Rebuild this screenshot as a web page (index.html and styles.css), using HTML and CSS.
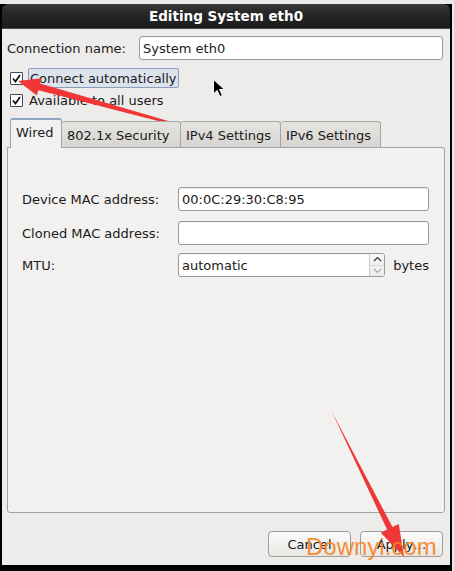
FILE: index.html
```html
<!DOCTYPE html>
<html>
<head>
<meta charset="utf-8">
<link rel="stylesheet" href="styles.css">
</head>
<body>
<div class="screen">
  <div class="window">
    <div class="titlebar">Editing System eth0</div>
    <div class="body">
      <div class="name-row">
        <span class="label">Connection name:</span>
        <div class="entry name-entry">System eth0</div>
      </div>
      <div class="check-row">
        <span class="cb"><svg width="11" height="11" viewBox="0 0 11 11"><path d="M2 5.5 L4.5 8.5 L9 2" fill="none" stroke="#111" stroke-width="1.7"/></svg></span>
        <span class="cb-label focus">Connect automatically</span>
      </div>
      <div class="check-row second">
        <span class="cb"><svg width="11" height="11" viewBox="0 0 11 11"><path d="M2 5.5 L4.5 8.5 L9 2" fill="none" stroke="#111" stroke-width="1.7"/></svg></span>
        <span class="cb-label">Available to all users</span>
      </div>
      <div class="tabs">
        <div class="tab active">Wired</div>
        <div class="tab">802.1x Security</div>
        <div class="tab">IPv4 Settings</div>
        <div class="tab">IPv6 Settings</div>
      </div>
      <div class="panel">
        <div class="field">
          <span class="flabel">Device MAC address:</span>
          <div class="entry grow">00:0C:29:30:C8:95</div>
        </div>
        <div class="field">
          <span class="flabel">Cloned MAC address:</span>
          <div class="entry grow"></div>
        </div>
        <div class="field mtu">
          <span class="flabel">MTU:</span>
          <div class="entry grow spin-entry">
            <span class="spin-text">automatic</span>
            <span class="spinner">
              <span class="spin-btn"><svg width="9" height="6" viewBox="0 0 9 6"><path d="M1 5 L4.5 1.5 L8 5" fill="none" stroke="#333" stroke-width="1.2"/></svg></span>
              <span class="spin-btn"><svg width="9" height="6" viewBox="0 0 9 6"><path d="M1 1 L4.5 4.5 L8 1" fill="none" stroke="#aaa" stroke-width="1.2"/></svg></span>
            </span>
          </div>
          <span class="unit">bytes</span>
        </div>
      </div>
      <div class="buttons">
        <button class="btn">Cancel</button>
        <button class="btn">Apply…</button>
      </div>
    </div>
  </div>

  <svg class="annot" width="454" height="571" viewBox="0 0 454 571">
    <polygon points="240,142 40.1,83.5 41.6,78.2 18,81 36.8,95.6 38.3,90.3" fill="#f03636"/>
    <polygon points="332,412 392.5,527 398.8,523.9 404,557 380.8,532.8 387.1,529.6" fill="#f03636"/>
    <path d="M213.5 79.5 L213.5 94 L217 90.5 L220 96.5 L222.5 95.3 L219.6 89.5 L224.5 89.5 Z" fill="#000" stroke="#fff" stroke-width="1"/>
  </svg>
  <div class="watermark">Downyi.com</div>
</div>
</body>
</html>
```

FILE: styles.css
```css
html, body {
  margin: 0;
  padding: 0;
}

body {
  background: #000;
  font-family: "DejaVu Sans", sans-serif;
  font-size: 13px;
  color: #1a1a1a;
}

.screen {
  position: relative;
  width: 454px;
  height: 571px;
  overflow: hidden;
  background:
    linear-gradient(#ebeae8, #ebeae8) top left / 454px 4px no-repeat,
    linear-gradient(#e8e8e8, #e8e8e8) right top / 2px 571px no-repeat,
    #000;
}

.window {
  margin-left: 2px;
  width: 448px;
  padding-top: 4px;
}

.titlebar {
  height: 24px;
  border-radius: 6px 6px 0 0;
  background: linear-gradient(#3a3a3a, #262626 40%, #1c1c1c);
  border-bottom: 1px solid #4a4a4a;
  color: #fff;
  font-weight: bold;
  font-size: 13.5px;
  display: flex;
  align-items: center;
  justify-content: center;
}

.body {
  background: #edeceb;
  padding: 7px 5px 8px 5px;
  display: flex;
  flex-direction: column;
}

.name-row {
  display: flex;
  align-items: center;
  justify-content: space-between;
  height: 24px;
  padding-right: 2px;
}

.entry {
  box-sizing: border-box;
  height: 24px;
  background: #fff;
  border: 1px solid #9a9a9a;
  border-radius: 3px;
  padding-left: 3px;
  display: flex;
  align-items: center;
  box-shadow: inset 0 1px 1px rgba(0,0,0,0.06);
}

.name-entry {
  width: 304px;
}

.check-row {
  display: flex;
  align-items: center;
  height: 20px;
  margin-top: 8px;
  padding-left: 3px;
}

.check-row.second {
  margin-top: 2px;
}

.cb {
  box-sizing: border-box;
  width: 13px;
  height: 13px;
  border: 1px solid #3a4860;
  background: #fff;
  display: flex;
  align-items: center;
  justify-content: center;
  border-radius: 1px;
}

.cb-label {
  margin-left: 6px;
  height: 20px;
  box-sizing: border-box;
  display: flex;
  align-items: center;
  white-space: nowrap;
}

.cb-label.focus {
  background: #dde3ec;
  border: 1px solid #8b9dba;
  border-radius: 2px;
  margin-left: 5px;
  padding: 0 1px;
}

.tabs {
  display: flex;
  align-items: flex-end;
  height: 29px;
  margin-top: 8px;
  padding-left: 3px;
  position: relative;
  z-index: 1;
}

.tab {
  box-sizing: border-box;
  height: 26px;
  padding: 1px 5px 0 5px;
  display: flex;
  align-items: center;
  white-space: nowrap;
  background: linear-gradient(#e6e4e1, #d7d5d1);
  border: 1px solid #a6a6a6;
  border-bottom: none;
  border-left: none;
  border-radius: 3px 3px 0 0;
}

.tab.active {
  height: 30px;
  margin-bottom: -1px;
  background: #f2f1f0;
  border: 1px solid #9aa5b8;
  border-top: 2px solid #8ea3c4;
  border-bottom: none;
  padding: 0 5px 4px 5px;
  width: 52px;
}

.tab:nth-child(2) { width: 119px; }
.tab:nth-child(3) { width: 100px; }
.tab:nth-child(4) { width: 100px; }

.panel {
  box-sizing: border-box;
  height: 366px;
  background: #f2f1f0;
  border: 1px solid #a3a3a3;
  border-radius: 0 3px 3px 3px;
  padding: 39px 15px 0 14px;
  display: flex;
  flex-direction: column;
  gap: 10px;
}

.field {
  display: flex;
  align-items: center;
  height: 24px;
}

.field.mtu {
  margin-top: -2px;
}

.flabel {
  width: 156px;
  flex: none;
}

.grow {
  flex: 1;
}

.spin-entry {
  padding-right: 0;
  justify-content: space-between;
}

.spinner {
  width: 14px;
  height: 22px;
  border-left: 1px solid #c8c8c8;
  display: flex;
  flex-direction: column;
  background: linear-gradient(#f8f8f8, #ebebeb);
  border-radius: 0 2px 2px 0;
}

.spin-btn {
  flex: 1;
  display: flex;
  align-items: center;
  justify-content: center;
}

.spin-btn + .spin-btn {
  border-top: 1px solid #d8d8d8;
}

.unit {
  margin-left: 8px;
}

.buttons {
  display: flex;
  justify-content: flex-end;
  gap: 9px;
  margin-top: 18px;
  padding-right: 2px;
}

.btn {
  box-sizing: border-box;
  width: 83px;
  height: 26px;
  font-family: "DejaVu Sans", sans-serif;
  font-size: 13px;
  color: #1a1a1a;
  background: linear-gradient(#fbfbfa, #e9e7e4);
  border: 1px solid #9e9e9e;
  border-radius: 4px;
  padding: 0;
}

.annot {
  position: absolute;
  left: 0;
  top: 0;
  pointer-events: none;
}

.watermark {
  position: absolute;
  left: 306px;
  top: 533px;
  font-family: "Liberation Sans", Arial, sans-serif;
  font-size: 24px;
  line-height: 27px;
  color: #f5841f;
  opacity: 0.9;
}
```
